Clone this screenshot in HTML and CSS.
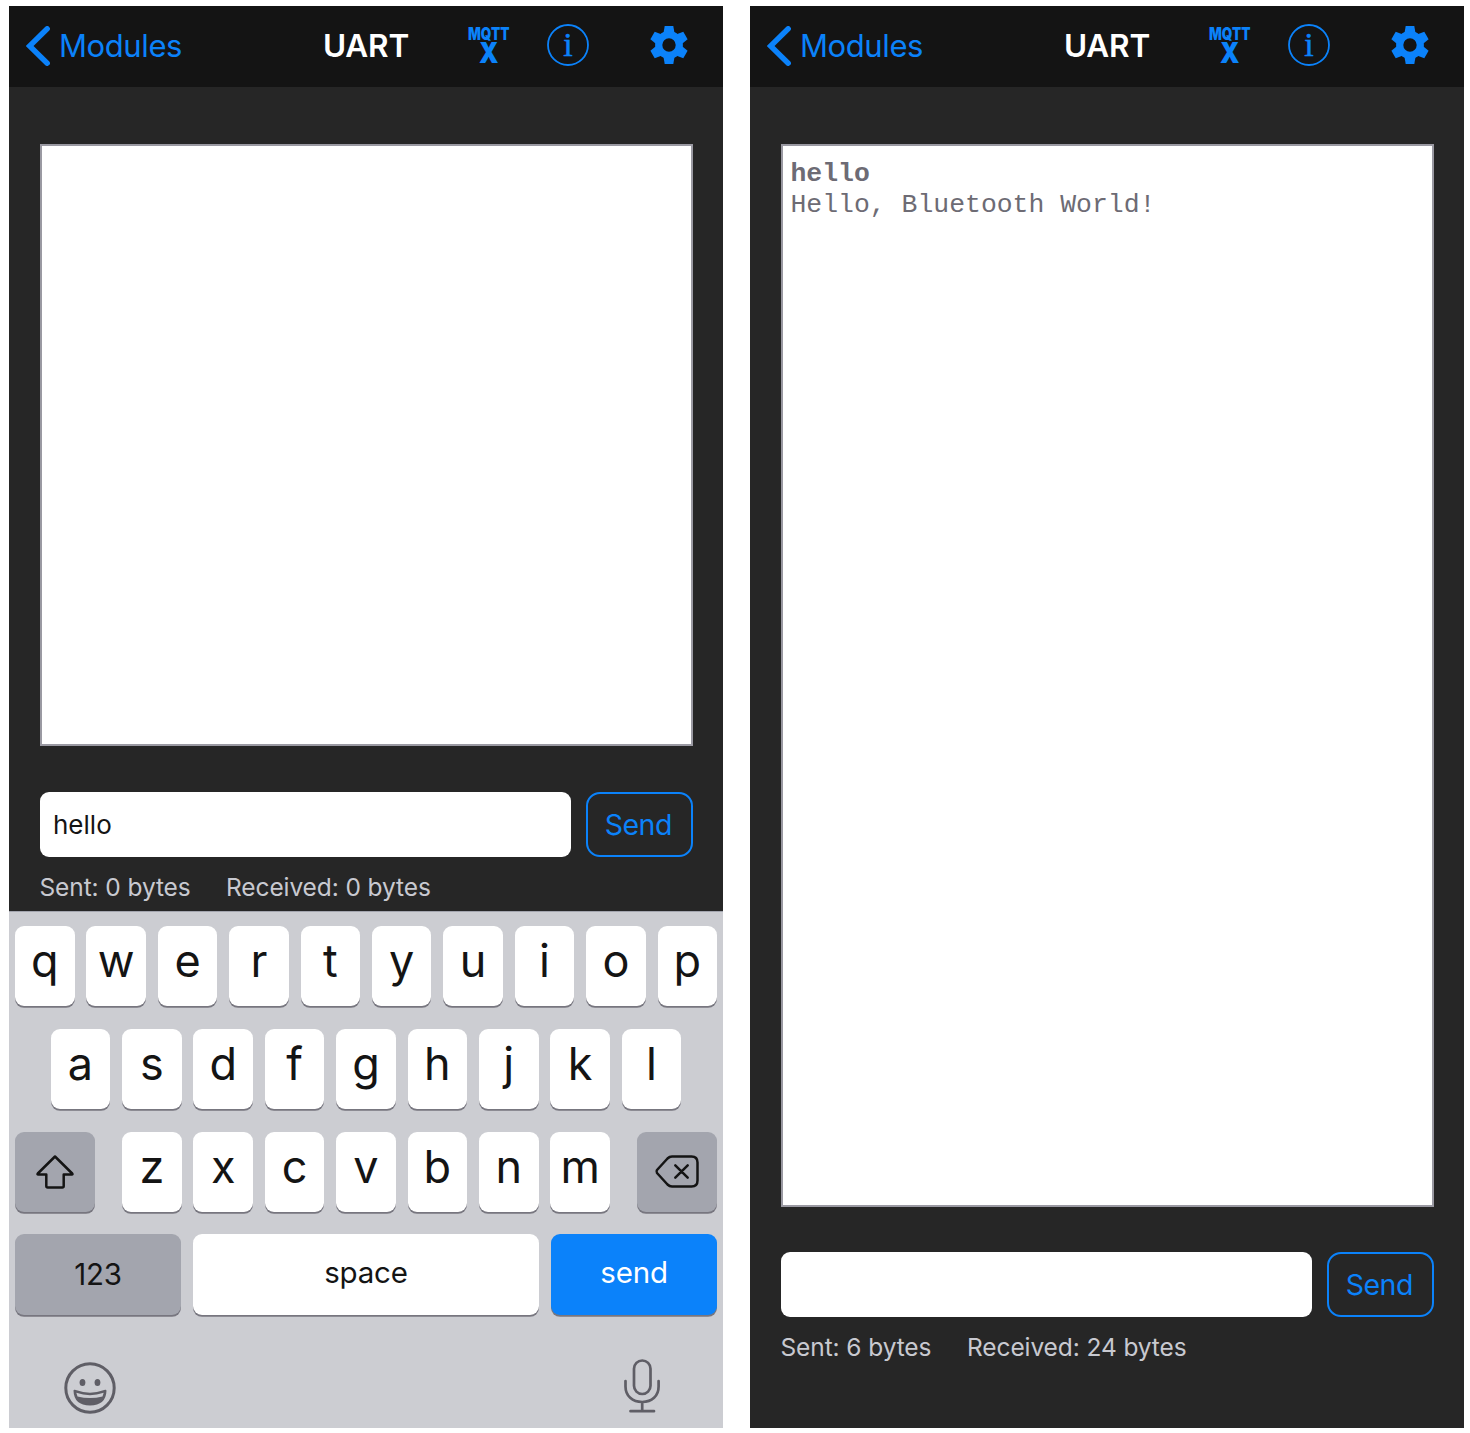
FILE: index.html
```html
<!DOCTYPE html>
<html lang="en">
<head>
<meta charset="utf-8">
<title>UART</title>
<link rel="stylesheet" href="styles.css">
</head>
<body>
<svg class="defs" width="0" height="0" aria-hidden="true">
  <symbol id="chevron" viewBox="0 0 24 40"><path d="M21.2 2.8 3.6 20 21.200 37.200" fill="none" stroke="currentColor" stroke-width="5.4" stroke-linecap="round" stroke-linejoin="miter"/></symbol>
  <symbol id="gear" viewBox="0 0 38 38">
    <circle cx="19" cy="19" r="10.300" fill="none" stroke="currentColor" stroke-width="7.200"/>
    <g fill="currentColor">
      <path id="tooth" d="M14.700 0H23.300L24.500 7 22 9H16L13.500 7Z"/>
      <use href="#tooth" transform="rotate(60 19 19)"/><use href="#tooth" transform="rotate(120 19 19)"/><use href="#tooth" transform="rotate(180 19 19)"/><use href="#tooth" transform="rotate(240 19 19)"/><use href="#tooth" transform="rotate(300 19 19)"/>
    </g>
  </symbol>
</svg>
<main class="screens">
  <section class="phone">
    <header class="nav">
      <a class="back"><svg class="chevron"><use href="#chevron"/></svg><span>Modules</span></a>
      <h1 class="title">UART</h1>
      <div class="actions">
        <svg class="mqtt" viewBox="0 0 44 40"><text x="1" y="14.500" font-size="17.500" textLength="41.500" lengthAdjust="spacingAndGlyphs">MQTT</text><text x="12" y="37.500" font-size="28" textLength="19.500" lengthAdjust="spacingAndGlyphs">X</text></svg>
        <svg class="info" viewBox="0 0 42 42"><circle cx="21" cy="21" r="20" fill="none" stroke="currentColor" stroke-width="1.800"/><text x="21" y="31.800" text-anchor="middle">i</text></svg>
        <svg class="gear"><use href="#gear"/></svg>
      </div>
    </header>
    <div class="content">
      <div class="console"></div>
      <div class="composer"><div class="field">hello</div><button class="send">Send</button></div>
      <div class="stats"><span class="sent">Sent: 0 bytes</span><span class="received">Received: 0 bytes</span></div>
    </div>
    <div class="keyboard">
      <div class="row"><b class="key">q</b><b class="key">w</b><b class="key">e</b><b class="key">r</b><b class="key">t</b><b class="key">y</b><b class="key">u</b><b class="key">i</b><b class="key">o</b><b class="key">p</b></div>
      <div class="row"><b class="key">a</b><b class="key">s</b><b class="key">d</b><b class="key">f</b><b class="key">g</b><b class="key">h</b><b class="key">j</b><b class="key">k</b><b class="key">l</b></div>
      <div class="row">
        <b class="key side shift"><svg width="38" height="34" viewBox="0 0 38 34"><path d="M19 1.500 36.200 18.500q.8 1-.4 1H27.700V31q0 1.500-1.500 1.500H11.800q-1.500 0-1.500-1.500V19.500H2.200q-1.200 0-.4-1Z" fill="none" stroke="#141414" stroke-width="2.500" stroke-linejoin="round"/></svg></b>
        <b class="key">z</b><b class="key">x</b><b class="key">c</b><b class="key">v</b><b class="key">b</b><b class="key">n</b><b class="key">m</b>
        <b class="key side delete"><svg width="44" height="33" viewBox="0 0 44 33"><path d="M17 1.500H36.500Q42.500 1.500 42.500 7.500V25.500Q42.500 31.500 36.500 31.500H17Q14.500 31.500 12.500 29.500L2 18Q1 16.500 2 15L12.500 3.500Q14.500 1.500 17 1.500ZM20.300 10.300 32.700 22.700M32.700 10.300 20.300 22.700" fill="none" stroke="#141414" stroke-width="2.500" stroke-linecap="round" stroke-linejoin="round"/></svg></b>
      </div>
      <div class="row"><b class="key word numbers">123</b><b class="key word space">space</b><b class="key word submit">send</b></div>
      <div class="tray">
        <svg class="emoji" width="52" height="52" viewBox="0 0 52 52"><circle cx="26" cy="26" r="24.200" fill="none" stroke="#5f5e66" stroke-width="3"/><ellipse cx="18.500" cy="20.600" rx="2.900" ry="3.500" fill="#5f5e66"/><ellipse cx="33.500" cy="20.600" rx="2.900" ry="3.500" fill="#5f5e66"/><path d="M10.500 28.800Q26 34.500 41.500 28.800Q41 42.500 26 42.500T10.500 28.800Z" fill="#5f5e66" stroke="#5f5e66" stroke-width="2" stroke-linejoin="round"/><path d="M12.300 30.800Q26 35.500 39.700 30.800L38.500 34.500Q26 37.500 13.500 34.500Z" fill="#cccdd2"/></svg>
        <svg width="36" height="54" viewBox="0 0 36 54"><g fill="none" stroke="#5f5e66" stroke-width="2.700" stroke-linecap="round"><rect x="10" y="1.500" width="16.500" height="33.500" rx="8.250"/><path d="M1.500 22V27.500C1.500 37 8.500 43 18.200 43S34.600 37 34.600 27.500V22M18.200 43V52M6.500 52.200H30"/></g></svg>
      </div>
    </div>
  </section>
  <section class="phone">
    <header class="nav">
      <a class="back"><svg class="chevron"><use href="#chevron"/></svg><span>Modules</span></a>
      <h1 class="title">UART</h1>
      <div class="actions">
        <svg class="mqtt" viewBox="0 0 44 40"><text x="1" y="14.500" font-size="17.500" textLength="41.500" lengthAdjust="spacingAndGlyphs">MQTT</text><text x="12" y="37.500" font-size="28" textLength="19.500" lengthAdjust="spacingAndGlyphs">X</text></svg>
        <svg class="info" viewBox="0 0 42 42"><circle cx="21" cy="21" r="20" fill="none" stroke="currentColor" stroke-width="1.800"/><text x="21" y="31.800" text-anchor="middle">i</text></svg>
        <svg class="gear"><use href="#gear"/></svg>
      </div>
    </header>
    <div class="content full">
      <div class="console"><p class="tx">hello</p><p>Hello, Bluetooth World!</p></div>
      <div class="composer"><div class="field"></div><button class="send">Send</button></div>
      <div class="stats"><span class="sent">Sent: 6 bytes</span><span class="received">Received: 24 bytes</span></div>
    </div>
  </section>
</main>
</body>
</html>
```
FILE: styles.css
```css
* { box-sizing: border-box; }
body { margin: 0; background: #fff; font-family: Inter, "Liberation Sans", sans-serif; }
.defs { display: block; }
svg { display: block; flex: none; overflow: visible; }
.screens { display: flex; gap: 27px; padding: 6px 0 0 9px; height: 1433px; }
.phone { width: 714px; height: 1422px; flex: none; background: #262626; display: flex; flex-direction: column; }
.nav { height: 81px; flex: none; background: #141414; color: #0b82fa; display: grid; grid-template-columns: 297px 86px 1fr; align-items: center; padding: 0 35px 2px 17px; }
.back { display: flex; align-items: center; gap: 9px; font-size: 31px; letter-spacing: -0.4px; }
.chevron { width: 24px; height: 40px; }
.title { margin: 0; font-size: 31.5px; letter-spacing: -0.2px; font-weight: 600; color: #fff; white-space: nowrap; }
.actions { display: flex; align-items: center; justify-content: flex-end; padding-bottom: 1px; }
.mqtt { width: 44px; height: 40px; margin-right: 36.5px; font-family: Inter, sans-serif; font-weight: 900; fill: currentColor; }
.info { width: 42px; height: 42px; margin-right: 61px; font-family: "Liberation Serif", serif; font-size: 34px; fill: currentColor; }
.info text { stroke: currentColor; stroke-width: .5px; }
.gear { width: 38px; height: 38px; }
.content { height: 824px; flex: none; padding: 57px 30.5px 0; display: flex; flex-direction: column; }
.content.full { height: 1341px; }
.console { flex: none; height: 602px; background: #fff; border: 2px solid #9a99a2; padding: 13px 8px; font: 26.45px/31px "Liberation Mono", monospace; color: #6d6b74; }
.full .console { height: 1062.5px; }
.console p { margin: 0; }
.console .tx { font-weight: 700; }
.composer { display: flex; gap: 15.5px; margin-top: 46px; height: 64.5px; flex: none; }
.full .composer { margin-top: 45.5px; height: 65px; }
.field { flex: 1; background: #fff; border-radius: 9px; padding: 0 13.5px; font-size: 26px; line-height: 65px; color: #141414; }
.send { width: 106.5px; padding: 0 2px 0 0; border: 2px solid #0b82fa; border-radius: 14px; background: none; color: #0b82fa; font: 28.5px/61px Inter, sans-serif; letter-spacing: -0.5px; }
.stats { display: flex; margin-top: 14.5px; font-size: 24.5px; letter-spacing: -0.1px; line-height: 32px; color: #c8c9d0; white-space: nowrap; }
.full .stats { margin-top: 14px; }
.sent { width: 186.5px; }
.keyboard { flex: 1; background: #cccdd2; border-top: 1px solid #a3a5ae; padding: 14px 6px 0; display: flex; flex-direction: column; gap: 22.8px; }
.row { display: flex; justify-content: center; gap: 11.9px; height: 80px; flex: none; }
.key { width: 59.5px; height: 80.4px; border-radius: 9px; background: #fff; color: #141414; box-shadow: 0 1.8px 0 #77767f; font-weight: 400; font-size: 45px; line-height: 70px; text-align: center; }
.side { width: 80px; background: #a3a5ae; display: flex; align-items: center; justify-content: center; }
.shift { margin-right: 14.8px; }
.delete { margin-left: 14.8px; }
.word { font-weight: 400; font-size: 29.5px; letter-spacing: -0.2px; line-height: 77px; }
.numbers { width: 166px; background: #a3a5ae; line-height: 81px; }
.space { width: 346.5px; }
.submit { width: 166px; background: #0b82fa; color: #fff; }
.tray { display: flex; justify-content: space-between; padding: 22px 57.5px 0 49px; }
.emoji { margin-top: 3px; }
```
